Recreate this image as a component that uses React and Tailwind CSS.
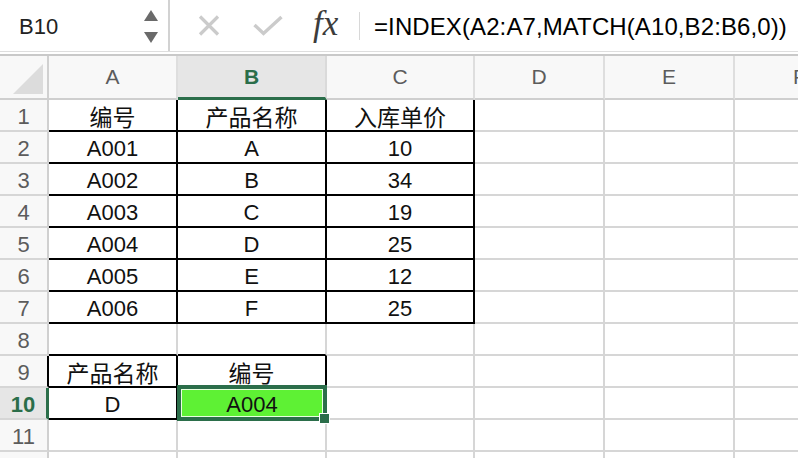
import React from "react";

const LAT = { fontFamily: '"Liberation Sans", Arial, "Noto Sans CJK SC", sans-serif' };
const CJK = { fontFamily: '"Noto Sans CJK SC", "Liberation Sans", sans-serif' };

function Cell({ children, br, bb, cjk }) {
  const cls =
    "h-[32px] border-r-2 border-b-2 flex items-center justify-center pt-[2px] text-[#111] " +
    (br ? "border-r-black " : "border-r-[#d6d6d6] ") +
    (bb ? "border-b-black " : "border-b-[#d6d6d6] ") +
    (cjk ? "text-[23px]" : "text-[22px]");
  return (
    <div className={cls} style={cjk ? CJK : LAT}>
      {children}
    </div>
  );
}

function RowHead({ n, black, selected }) {
  if (selected) {
    return (
      <div
        className="h-[32px] border-b-2 border-b-[#d6d6d6] border-r-[3px] border-r-[#2b6e4a] bg-[#e6e6e6] flex items-center justify-center pt-[2px] text-[22px] font-bold text-[#2b6e4a]"
        style={LAT}
      >
        {n}
      </div>
    );
  }
  return (
    <div
      className={
        "h-[32px] border-b-2 border-b-[#d6d6d6] border-r-2 bg-[#f8f8f8] flex items-center justify-center pt-[2px] text-[22px] text-[#5c5c5c] " +
        (black ? "border-r-black" : "border-r-[#d0d0d0]")
      }
      style={LAT}
    >
      {n}
    </div>
  );
}

const table = [
  ["编号", "产品名称", "入库单价"],
  ["A001", "A", "10"],
  ["A002", "B", "34"],
  ["A003", "C", "19"],
  ["A004", "D", "25"],
  ["A005", "E", "12"],
  ["A006", "F", "25"],
];

function isCjk(s) {
  return /[\u4e00-\u9fff]/.test(s);
}

export default function App() {
  return (
    <div className="w-[798px] h-[458px] overflow-hidden bg-white">
      {/* formula bar */}
      <div className="flex h-[52px] bg-white border-b border-b-[#dedede]">
        <div className="w-[170px] shrink-0 flex items-center justify-between pl-[19px] pr-[10px] border-r-2 border-r-[#d2d2d2]">
          <span className="text-[22px] text-[#222] pt-[2px]" style={LAT}>
            B10
          </span>
          <div className="flex flex-col items-center gap-[11px] pt-[1px]">
            <svg width="14" height="11" viewBox="0 0 14 11">
              <polygon points="7,0 14,11 0,11" fill="#6a6a6a" />
            </svg>
            <svg width="14" height="11" viewBox="0 0 14 11">
              <polygon points="0,0 14,0 7,11" fill="#6a6a6a" />
            </svg>
          </div>
        </div>
        <div className="flex items-center">
          <svg className="ml-[28px]" width="22" height="21" viewBox="0 0 22 21">
            <path d="M2 1.5 L20 19.5 M20 1.5 L2 19.5" stroke="#cbcbcb" strokeWidth="3.2" fill="none" />
          </svg>
          <svg className="ml-[33px]" width="30" height="21" viewBox="0 0 30 21">
            <path d="M1.5 10 L10.5 18.5 L28.5 2" stroke="#cbcbcb" strokeWidth="3.4" fill="none" />
          </svg>
          <span
            className="ml-[30px] w-[32px] text-[35px] italic text-[#3c3c3c] leading-none -mt-[4px]"
            style={{ fontFamily: '"Liberation Serif", "Times New Roman", serif' }}
          >
            fx
          </span>
          <div className="ml-[14px] w-px h-[28px] bg-[#d8d8d8]" />
          <span className="ml-[14px] pt-[2px] text-[24px] text-black tracking-[0.1px] whitespace-nowrap" style={LAT}>
            =INDEX(A2:A7,MATCH(A10,B2:B6,0))
          </span>
        </div>
      </div>
      <div className="h-[2px] bg-white" />
      <div className="h-[2px] bg-[#c9c9c9]" />

      {/* sheet */}
      <div className="grid grid-cols-[49px_129px_149px_148px_130px_130px_1fr]">
        {/* header row */}
        <div className="h-[44px] border-r-2 border-r-[#d0d0d0] border-b-2 border-b-[#cfcfcf] bg-[#f8f8f8] flex items-end justify-end pr-[4px] pb-[4px]">
          <svg width="30" height="30" viewBox="0 0 30 30">
            <polygon points="30,0 30,30 0,30" fill="#dcdcdc" />
          </svg>
        </div>
        {["A", "B", "C", "D", "E", "F"].map((c) =>
          c === "B" ? (
            <div
              key={c}
              className="h-[44px] border-r-2 border-r-[#dadada] border-b-[3px] border-b-[#2b6e4a] bg-[#e6e6e6] flex items-center justify-center text-[21px] font-bold text-[#2b6e4a]"
              style={LAT}
            >
              {c}
            </div>
          ) : (
            <div
              key={c}
              className={
                "h-[44px] border-r-2 border-r-[#dedede] border-b-2 border-b-[#cfcfcf] bg-[#f8f8f8] flex items-center text-[21px] text-[#5c5c5c] " +
                (c === "F" ? "justify-start pl-[58px]" : "justify-center")
              }
              style={LAT}
            >
              {c}
            </div>
          )
        )}

        {/* rows 1-7 */}
        {table.map((r, i) => (
          <React.Fragment key={i}>
            <RowHead n={i + 1} />
            {r.map((v, j) => (
              <Cell key={j} br bb cjk={isCjk(v)}>
                {v}
              </Cell>
            ))}
            <Cell />
            <Cell />
            <Cell />
          </React.Fragment>
        ))}

        {/* row 8 */}
        <RowHead n={8} />
        <Cell bb />
        <Cell bb />
        <Cell />
        <Cell />
        <Cell />
        <Cell />

        {/* row 9 */}
        <RowHead n={9} black />
        <Cell br bb cjk>
          产品名称
        </Cell>
        <Cell br bb cjk>
          编号
        </Cell>
        <Cell />
        <Cell />
        <Cell />
        <Cell />

        {/* row 10 */}
        <RowHead n={10} selected />
        <Cell br bb>
          D
        </Cell>
        <div className="relative h-[32px] border-r-2 border-b-2 border-r-black border-b-black">
          <div className="absolute -left-[1px] -top-[3px] w-[150px] h-[36px] border-[4px] border-[#2b6e4a] z-10">
            <div
              className="w-full h-full border border-[#e9ffe0] bg-[#5ef134] flex items-center justify-center pt-[2px] text-[22px] text-[#111]"
              style={LAT}
            >
              A004
            </div>
            <div className="absolute -right-[7px] -bottom-[7px] w-[11px] h-[11px] bg-[#2b6e4a] border border-white" />
          </div>
        </div>
        <Cell />
        <Cell />
        <Cell />
        <Cell />

        {/* row 11 */}
        <RowHead n={11} />
        <Cell />
        <Cell />
        <Cell />
        <Cell />
        <Cell />
        <Cell />

        {/* row 12 (only its top edge is visible) */}
        <RowHead n="" />
        <Cell />
        <Cell />
        <Cell />
        <Cell />
        <Cell />
        <Cell />
      </div>
    </div>
  );
}
